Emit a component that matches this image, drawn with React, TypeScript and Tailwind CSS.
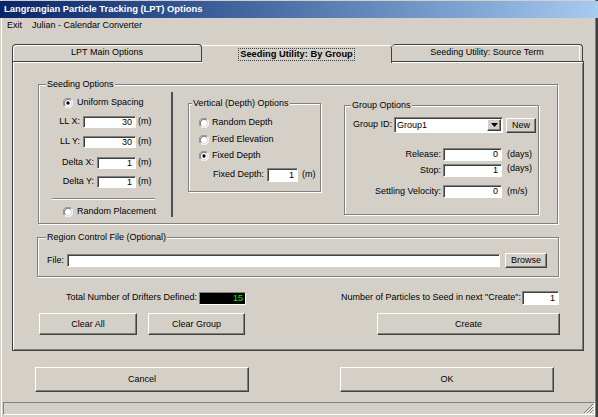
import React from "react";

function Radio({ checked }: { checked?: boolean }) {
  return (
    <svg width="10" height="10" viewBox="0 0 12 12" className="shrink-0">
      <circle cx="6" cy="6" r="5.5" fill="#fff" />
      <path d="M10.2 1.8 A5.94 5.94 0 0 0 1.8 10.2" stroke="#808080" strokeWidth="1" fill="none" />
      <path d="M1.8 10.2 A5.94 5.94 0 0 0 10.2 1.8" stroke="#ffffff" strokeWidth="1" fill="none" />
      <path d="M9.3 2.7 A4.67 4.67 0 0 0 2.7 9.3" stroke="#404040" strokeWidth="1" fill="none" />
      <path d="M2.7 9.3 A4.67 4.67 0 0 0 9.3 2.7" stroke="#d4d0c8" strokeWidth="1" fill="none" />
      {checked && <circle cx="6" cy="6" r="2" fill="#000" />}
    </svg>
  );
}

function Field({ className = "", children }: { className?: string; children?: React.ReactNode }) {
  return (
    <div
      className={`bg-white border border-t-[#808080] border-l-[#808080] border-b-white border-r-white shadow-[inset_1px_1px_0_#404040] flex items-center leading-none ${className}`}
    >
      {children}
    </div>
  );
}

function Btn({ className = "", children }: { className?: string; children?: React.ReactNode }) {
  return (
    <div
      className={`flex items-center justify-center border border-t-white border-l-white border-b-[#404040] border-r-[#404040] shadow-[inset_-1px_-1px_0_#808080] leading-none ${className}`}
    >
      {children}
    </div>
  );
}

function Group({
  label,
  labelClass = "",
  className = "",
  children,
}: {
  label: string;
  labelClass?: string;
  className?: string;
  children?: React.ReactNode;
}) {
  return (
    <div className={`relative border border-[#808080] shadow-[inset_1px_1px_0_#fff,1px_1px_0_#fff] ${className}`}>
      <span className={`absolute -top-[7px] bg-[#d4d0c8] px-[1px] leading-[12px] ${labelClass}`}>{label}</span>
      {children}
    </div>
  );
}

export default function App() {
  return (
    <div className="w-[598px] h-[417px] bg-[#d4d0c8] flex flex-col font-['Liberation_Sans',Arial,sans-serif] text-[9px] text-black overflow-hidden shadow-[inset_1px_0_0_#d4d0c8,inset_2px_0_0_#fff,inset_-2px_0_0_#404040,inset_-3px_0_0_#808080]">
      {/* Title bar */}
      <div className="mt-[1px] h-[17px] shrink-0 flex items-center pl-[4px] bg-gradient-to-r from-[#0a246a] to-[#a6caf0] text-white font-bold text-[9.4px]">
        Langrangian Particle Tracking (LPT) Options
      </div>
      {/* Menu bar */}
      <div className="h-[16px] shrink-0 flex items-center pl-[7px]">
        <span className="w-[25px]">Exit</span>
        <span>Julian - Calendar Converter</span>
      </div>

      {/* Tabs */}
      <div className="mt-[8px] ml-[12px] h-[19px] flex items-start shrink-0">
        <div className="mt-[2px] w-[190px] h-[17px] flex items-center justify-center border border-b-0 border-[#404040] rounded-t-[4px] shadow-[inset_1px_1px_0_#fff]">
          LPT Main Options
        </div>
        <div className="relative z-10 mt-[3px] w-[190px] h-[18px] flex items-start justify-center pt-[2px] bg-[#d4d0c8] border-t border-r border-t-white border-r-[#404040] rounded-tr-[4px]">
          <span className="border border-dotted border-[#404040] px-[1px] h-[13px] flex items-center font-bold text-[9.3px]">
            Seeding Utility: By Group
          </span>
        </div>
        <div className="mt-[2px] w-[191px] h-[17px] flex items-center justify-center border border-b-0 border-l-0 border-[#404040] rounded-t-[4px] shadow-[inset_0_1px_0_#fff,inset_-2px_0_0_#d4d0c8,inset_-3px_0_0_#fff]">
          Seeding Utility: Source Term
        </div>
      </div>

      {/* Panel */}
      <div className="ml-[12px] w-[572px] h-[290px] shrink-0 border border-[#404040] shadow-[inset_1px_1px_0_#fff,inset_-1px_-1px_0_#808080] flex flex-col">
        {/* Seeding options */}
        <Group label="Seeding Options" labelClass="left-[7px]" className="mt-[22px] ml-[25px] w-[520px] h-[140px] shrink-0 flex">
          {/* Left column */}
          <div className="w-[132px] flex flex-col">
            <div className="mt-[13px] pl-[24px] h-[10px] flex items-center gap-[4px]">
              <Radio checked />
              <span>Uniform Spacing</span>
            </div>
            <div className="mt-[8px] h-[12px] flex items-center">
              <div className="w-[97px] flex items-center justify-end">
                <span className="mr-[3px]">LL X:</span>
                <Field className="w-[53px] h-[12px] justify-end pr-[3px]">30</Field>
              </div>
              <span className="ml-[2px]">(m)</span>
            </div>
            <div className="mt-[8px] h-[12px] flex items-center">
              <div className="w-[97px] flex items-center justify-end">
                <span className="mr-[3px]">LL Y:</span>
                <Field className="w-[53px] h-[12px] justify-end pr-[3px]">30</Field>
              </div>
              <span className="ml-[2px]">(m)</span>
            </div>
            <div className="mt-[9px] h-[12px] flex items-center">
              <div className="w-[97px] flex items-center justify-end">
                <span className="mr-[3px]">Delta X:</span>
                <Field className="w-[39px] h-[12px] justify-end pr-[3px]">1</Field>
              </div>
              <span className="ml-[2px]">(m)</span>
            </div>
            <div className="mt-[7px] h-[12px] flex items-center">
              <div className="w-[97px] flex items-center justify-end">
                <span className="mr-[3px]">Delta Y:</span>
                <Field className="w-[39px] h-[12px] justify-end pr-[3px]">1</Field>
              </div>
              <span className="ml-[2px]">(m)</span>
            </div>
            <div className="mt-[10px] ml-[13px] w-[103px] h-[2px] border-t border-b border-t-[#808080] border-b-white" />
            <div className="mt-[7px] pl-[24px] h-[10px] flex items-center gap-[4px]">
              <Radio />
              <span>Random Placement</span>
            </div>
          </div>
          {/* Vertical separator */}
          <div className="mt-[7px] w-[2px] h-[125px] bg-[#505050]" />

          {/* Vertical (Depth) options */}
          <Group
            label="Vertical (Depth) Options"
            labelClass="left-[3px]"
            className="mt-[18px] ml-[15px] w-[133px] h-[89px] shrink-0 flex flex-col"
          >
            <div className="mt-[14px] pl-[10px] h-[10px] flex items-center gap-[3px]">
              <Radio />
              <span>Random Depth</span>
            </div>
            <div className="mt-[7px] pl-[10px] h-[10px] flex items-center gap-[3px]">
              <Radio />
              <span>Fixed Elevation</span>
            </div>
            <div className="mt-[6px] pl-[10px] h-[10px] flex items-center gap-[3px]">
              <Radio checked />
              <span>Fixed Depth</span>
            </div>
            <div className="mt-[7px] pl-[24px] h-[14px] flex items-center">
              <span>Fixed Depth:</span>
              <Field className="ml-[3px] w-[31px] h-[14px] justify-end pr-[3px]">1</Field>
              <span className="ml-[4px]">(m)</span>
            </div>
          </Group>

          {/* Group options */}
          <Group
            label="Group Options"
            labelClass="left-[6px]"
            className="mt-[20px] ml-[23px] w-[195px] h-[110px] shrink-0 flex flex-col"
          >
            <div className="mt-[11px] pl-[8px] h-[16px] flex items-center">
              <span>Group ID:</span>
              <Field className="ml-[2px] w-[109px] h-[16px] pl-[2px]">
                <span className="flex-1">Group1</span>
                <Btn className="w-[14px] h-[12px] mr-[1px] bg-[#d4d0c8]">
                  <svg width="7" height="4" viewBox="0 0 7 4">
                    <path d="M0 0 H7 L3.5 4 Z" fill="#000" />
                  </svg>
                </Btn>
              </Field>
              <Btn className="ml-[3px] w-[30px] h-[15px]">New</Btn>
            </div>
            <div className="mt-[15px] h-[13px] flex items-center">
              <div className="w-[157px] flex items-center justify-end">
                <span className="mr-[2px]">Release:</span>
                <Field className="w-[59px] h-[13px] justify-end pr-[3px]">0</Field>
              </div>
              <span className="ml-[5px]">(days)</span>
            </div>
            <div className="mt-[3px] h-[13px] flex items-center">
              <div className="w-[157px] flex items-center justify-end">
                <span className="mr-[2px]">Stop:</span>
                <Field className="w-[59px] h-[13px] justify-end pr-[3px]">1</Field>
              </div>
              <span className="ml-[5px] -mt-[3px]">(days)</span>
            </div>
            <div className="mt-[8px] h-[13px] flex items-center">
              <div className="w-[157px] flex items-center justify-end">
                <span className="mr-[2px]">Settling Velocity:</span>
                <Field className="w-[59px] h-[13px] justify-end pr-[3px]">0</Field>
              </div>
              <span className="ml-[5px]">(m/s)</span>
            </div>
          </Group>
        </Group>

        {/* Region control file */}
        <Group
          label="Region Control File (Optional)"
          labelClass="left-[8px]"
          className="mt-[13px] ml-[24px] w-[522px] h-[40px] shrink-0 flex flex-col"
        >
          <div className="mt-[15px] pl-[9px] h-[15px] flex items-center">
            <span className="w-[20px]">File:</span>
            <Field className="w-[433px] h-[13px]" />
            <Btn className="ml-[5px] w-[42px] h-[15px]">Browse</Btn>
          </div>
        </Group>

        {/* Stats row */}
        <div className="mt-[14px] h-[14px] shrink-0 flex items-center">
          <div className="w-[184px] flex justify-end">
            <span>Total Number of Drifters Defined:</span>
          </div>
          <div className="ml-[2px] w-[47px] h-[13px] bg-black border border-t-[#808080] border-l-[#808080] border-b-white border-r-white flex items-center justify-end pr-[2px] text-[#00ff00] leading-none">
            15
          </div>
          <div className="ml-auto flex items-center mr-[24px]">
            <span>Number of Particles to Seed in next "Create":</span>
            <Field className="ml-[1px] w-[37px] h-[14px] justify-end pr-[3px]">1</Field>
          </div>
        </div>

        {/* Buttons row */}
        <div className="mt-[8px] h-[22px] shrink-0 flex">
          <Btn className="ml-[26px] w-[98px] h-[22px]">Clear All</Btn>
          <Btn className="ml-[11px] w-[97px] h-[22px]">Clear Group</Btn>
          <Btn className="ml-auto mr-[23px] w-[183px] h-[22px]">Create</Btn>
        </div>
      </div>

      {/* Bottom buttons */}
      <div className="mt-[16px] h-[25px] shrink-0 flex">
        <Btn className="ml-[35px] w-[214px] h-[25px]">Cancel</Btn>
        <Btn className="ml-[91px] w-[214px] h-[25px]">OK</Btn>
      </div>

      {/* Status bar */}
      <div className="mt-[10px] mx-[3px] h-[13px] shrink-0 border border-t-[#808080] border-l-[#808080] border-b-white border-r-white flex items-end justify-end">
        <svg width="11" height="11" viewBox="0 0 11 11" className="mb-[0px] mr-[0px]">
          <path d="M10 1 L1 10 M10 4 L4 10 M10 7 L7 10" stroke="#808080" strokeWidth="1" />
          <path d="M11 2 L2 11 M11 5 L5 11 M11 8 L8 11" stroke="#fff" strokeWidth="1" />
        </svg>
      </div>
    </div>
  );
}
